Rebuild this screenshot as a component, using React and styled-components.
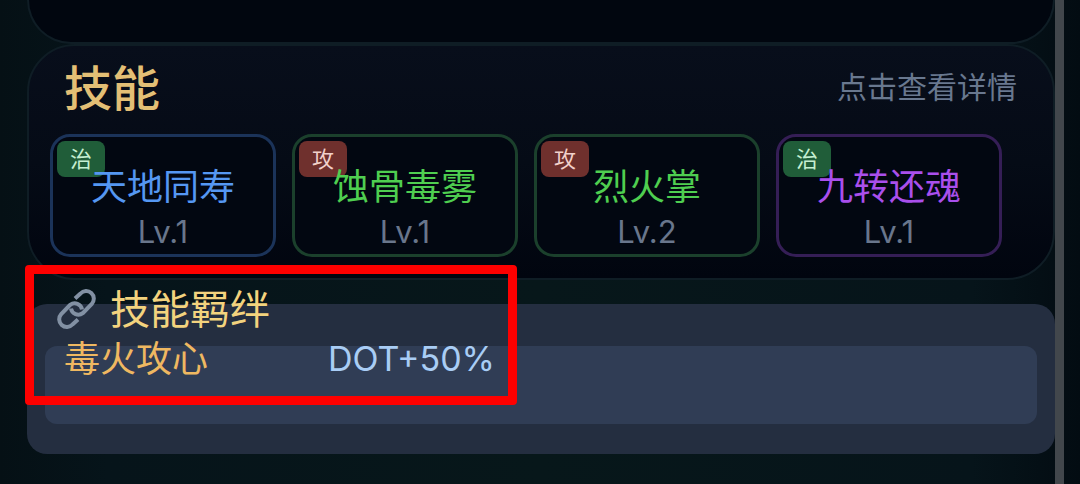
import React from "react";
import styled, { createGlobalStyle } from "styled-components";

const GlobalStyle = createGlobalStyle`
  * { box-sizing: border-box; }
  body {
    margin: 0;
    background: #051015;
    font-family: "Noto Sans CJK SC", sans-serif;
  }
  h2, h3, p { margin: 0; font-weight: 400; }
`;

const Page = styled.div`
  display: flex;
  min-height: 100vh;
  padding: 0 16px 0 27px;
  overflow: hidden;
  background: linear-gradient(90deg, #051015 0%, #06141a 10%, #07171a 50%, #06141a 90%, #030c12 100%);
`;

const Content = styled.main`
  flex: 1;
  min-width: 0;
`;

const Scrollbar = styled.div`
  width: 9px;
  background: #42474c;
`;

const Panel = styled.section`
  border: 2px solid #0f1d25;
  border-radius: 48px;
  background: linear-gradient(180deg, #080e1b 0%, #050b16 50%, #01050f 100%);
`;

const PreviousPanel = styled(Panel)`
  height: 44px;
  border-top: 0;
  border-radius: 0 0 48px 48px;
  background: #01060f;
`;

const SkillPanel = styled(Panel)`
  padding: 9px 20px 21px;
`;

const PanelHeader = styled.header`
  display: flex;
  align-items: center;
  justify-content: space-between;
  height: 60px;
  padding: 0 16px 0 15px;
`;

const PanelTitle = styled.h2`
  font-size: 48px;
  line-height: 60px;
  font-weight: 500;
  color: #e3bf75;
`;

const Hint = styled.p`
  font-size: 30px;
  line-height: 36px;
  color: #69788f;
`;

const SkillGrid = styled.div`
  display: grid;
  grid-template-columns: repeat(4, 1fr);
  gap: 16px;
  margin: 19px 31px 0 1px;
`;

const SkillCard = styled.button`
  position: relative;
  display: flex;
  flex-direction: column;
  align-items: center;
  gap: 8px;
  padding: 27px 0 2px;
  border: 3px solid ${(p) => p.$border};
  border-radius: 20px;
  background: #020711;
  font-family: inherit;
  cursor: pointer;
`;

const Badge = styled.span`
  position: absolute;
  top: 4px;
  left: 4px;
  width: 48px;
  height: 36px;
  border-radius: 8px;
  background: ${(p) => (p.$heal ? "#205d39" : "#6f302d")};
  color: ${(p) => (p.$heal ? "#c5efd1" : "#f2d0ca")};
  font-size: 22px;
  line-height: 32px;
  text-align: center;
`;

const SkillName = styled.span`
  position: relative;
  font-size: 36px;
  line-height: 40px;
  color: ${(p) => p.$color};
`;

const Level = styled.span`
  font-family: Inter, sans-serif;
  font-size: 31px;
  line-height: 40px;
  color: #69768c;
`;

const BondPanel = styled.section`
  position: relative;
  display: flex;
  flex-direction: column;
  margin-top: 24px;
  padding: 0 18px 30px;
  border-radius: 20px;
  background: #242e40;
`;

const BondHeader = styled.header`
  display: flex;
  align-items: center;
  gap: 14px;
  height: 40px;
  margin-top: -15px;
  padding-left: 11px;
`;

const BondTitle = styled.h3`
  font-size: 40px;
  line-height: 32px;
  margin-bottom: 4px;
  color: #f3d37e;
`;

const BondRow = styled.div`
  display: flex;
  align-items: flex-start;
  gap: 120px;
  height: 78px;
  margin-top: 17px;
  padding: 0 19px;
  border-radius: 12px;
  background: #303d55;
`;

const BondName = styled.span`
  margin-top: -8px;
  font-size: 36px;
  line-height: 36px;
  color: #efb861;
`;

const BondEffect = styled.span`
  margin-top: -5px;
  font-family: Inter, sans-serif;
  font-size: 34px;
  line-height: 36px;
  color: #a9cdf5;
`;

const Highlight = styled.div`
  position: absolute;
  top: -39px;
  bottom: 49px;
  left: -2px;
  width: 492px;
  border: 9px solid #fe0000;
  border-radius: 4px;
  pointer-events: none;
`;

const GREEN = { color: "#4fce50", border: "#1b402c" };
const skills = [
  { name: "天地同寿", level: 1, heal: true, color: "#5597f2", border: "#1b3359" },
  { name: "蚀骨毒雾", level: 1, heal: false, ...GREEN },
  { name: "烈火掌", level: 2, heal: false, ...GREEN },
  { name: "九转还魂", level: 1, heal: true, color: "#a94fec", border: "#351e56" },
];

function LinkIcon() {
  return (
    <svg width="40" height="40" viewBox="0 0 40 40" fill="none" stroke="#8290a3" strokeWidth="4" aria-hidden="true">
      <path d="M19 9.5 L24.5 4.5 A7.4 7.4 0 0 1 35.8 14.8 L26.8 24.2 A7.4 7.4 0 0 1 15 19.5" />
      <path d="M22 30.5 L16.5 35.5 A7.4 7.4 0 0 1 5.2 25.2 L14.2 15.8 A7.4 7.4 0 0 1 26 20.5" />
    </svg>
  );
}

export default function App() {
  return (
    <>
      <GlobalStyle />
      <Page>
        <Content>
          <PreviousPanel />
          <SkillPanel>
            <PanelHeader>
              <PanelTitle>技能</PanelTitle>
              <Hint>点击查看详情</Hint>
            </PanelHeader>
            <SkillGrid>
              {skills.map((s) => (
                <SkillCard key={s.name} type="button" $border={s.border}>
                  <Badge $heal={s.heal}>{s.heal ? "治" : "攻"}</Badge>
                  <SkillName $color={s.color}>{s.name}</SkillName>
                  <Level>Lv.{s.level}</Level>
                </SkillCard>
              ))}
            </SkillGrid>
          </SkillPanel>
          <BondPanel>
            <BondHeader>
              <LinkIcon />
              <BondTitle>技能羁绊</BondTitle>
            </BondHeader>
            <BondRow>
              <BondName>毒火攻心</BondName>
              <BondEffect>DOT+50%</BondEffect>
            </BondRow>
            <Highlight />
          </BondPanel>
        </Content>
        <Scrollbar />
      </Page>
    </>
  );
}
